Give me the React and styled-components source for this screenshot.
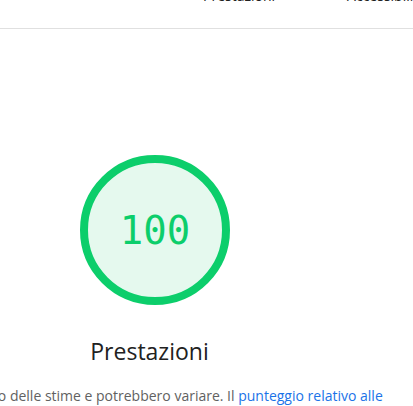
import React from 'react';
import styled, { createGlobalStyle } from 'styled-components';

const Global = createGlobalStyle`
  html, body {
    margin: 0;
    padding: 0;
    background: #fff;
    overflow: hidden;
  }
  body {
    font-family: 'Open Sans', 'Noto Sans', sans-serif;
  }
`;

const Page = styled.div`
  width: 413px;
  height: 406px;
  overflow: hidden;
  position: relative;
`;

const TopBar = styled.div`
  height: 28px;
  border-bottom: 1px solid #e0e0e0;
  overflow: hidden;
`;

const Tabs = styled.div`
  display: flex;
  gap: 72px;
  padding-left: 203px;
  margin-top: -13px;
  white-space: nowrap;
`;

const Tab = styled.div`
  font-size: 14px;
  line-height: 17px;
  color: #212121;
  font-weight: 500;
`;

const Category = styled.div`
  width: 310px;
  display: flex;
  flex-direction: column;
  align-items: center;
  padding-top: 125px;
`;

const Gauge = styled.div`
  position: relative;
  width: 152px;
  height: 152px;
`;

const Score = styled.div`
  position: absolute;
  inset: 0;
  display: flex;
  align-items: center;
  justify-content: center;
  font-family: 'DejaVu Sans Mono', 'Liberation Mono', monospace;
  font-size: 39px;
  color: #0cce6b;
`;

const Title = styled.div`
  margin-top: 30px;
  margin-right: 11px;
  font-size: 23px;
  line-height: 30px;
  color: #212121;
`;

const Description = styled.div`
  margin-top: 20px;
  margin-left: -73px;
  white-space: nowrap;
  font-size: 14px;
  line-height: 20px;
  color: #616161;

  a {
    color: #1a73e8;
    text-decoration: none;
  }
`;

export default function App() {
  return (
    <Page>
      <Global />
      <TopBar>
        <Tabs>
          <Tab>Prestazioni</Tab>
          <Tab>Accessibilità</Tab>
        </Tabs>
      </TopBar>
      <Category>
        <Gauge>
          <svg width="152" height="152" viewBox="0 0 152 152">
            <circle cx="76" cy="76" r="71" fill="#e5f9ee" stroke="#0cce6b" strokeWidth="8" />
          </svg>
          <Score>100</Score>
        </Gauge>
        <Title>Prestazioni</Title>
      </Category>
      <Description>
        I valori sono delle stime e potrebbero variare. Il <a href="#">punteggio relativo alle</a>
      </Description>
    </Page>
  );
}
